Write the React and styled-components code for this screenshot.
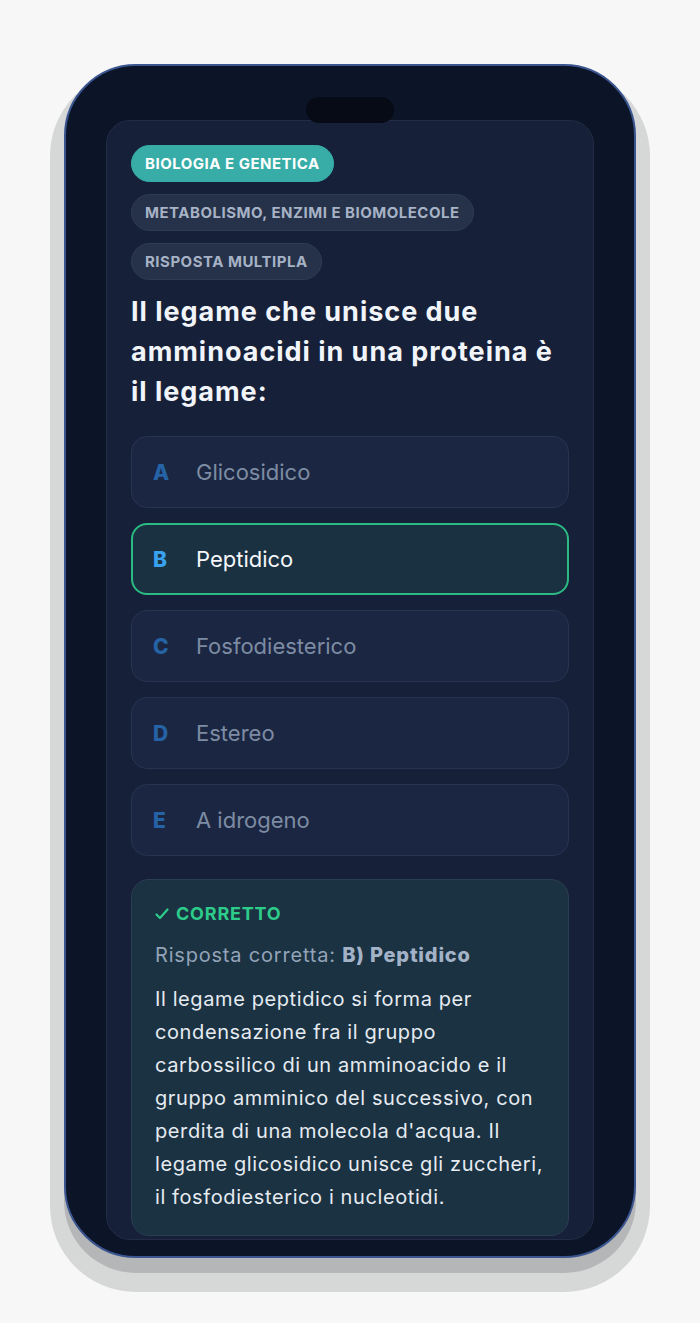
import React from 'react'
import styled, { createGlobalStyle } from 'styled-components'

const GlobalStyle = createGlobalStyle`
  html, body {
    margin: 0;
    padding: 0;
    background: #f7f7f7;
  }
  body {
    font-family: Inter, "Noto Sans", "Liberation Sans", sans-serif;
    -webkit-font-smoothing: antialiased;
  }
`

const options = [
  { key: 'A', text: 'Glicosidico' },
  { key: 'B', text: 'Peptidico', selected: true },
  { key: 'C', text: 'Fosfodiesterico' },
  { key: 'D', text: 'Estereo' },
  { key: 'E', text: 'A idrogeno' },
]

export default function App() {
  return (
    <Page>
      <GlobalStyle />
      <Phone>
        <Notch />
        <Screen>
          <Tags>
            <Tag accent>Biologia e genetica</Tag>
            <Tag>Metabolismo, enzimi e biomolecole</Tag>
            <Tag>Risposta multipla</Tag>
          </Tags>

          <Question>Il legame che unisce due amminoacidi in una proteina è il legame:</Question>

          <Options>
            {options.map((o) => (
              <Option key={o.key} selected={o.selected}>
                <Letter selected={o.selected}>{o.key}</Letter>
                <OptionText selected={o.selected}>{o.text}</OptionText>
              </Option>
            ))}
          </Options>

          <Feedback>
            <Verdict>
              <svg width="14" height="14" viewBox="0 0 14 14" fill="none">
                <polyline points="1.5,7.5 5,11 12.5,2.5" stroke="#2ecc8a" strokeWidth="2.2" strokeLinecap="round" strokeLinejoin="round" />
              </svg>
              CORRETTO
            </Verdict>
            <Answer>
              Risposta corretta: <strong>B) Peptidico</strong>
            </Answer>
            <Explanation>
              Il legame peptidico si forma per condensazione fra il gruppo carbossilico di un amminoacido e il gruppo
              amminico del successivo, con perdita di una molecola d'acqua. Il legame glicosidico unisce gli zuccheri,
              il fosfodiesterico i nucleotidi.
            </Explanation>
          </Feedback>
        </Screen>
      </Phone>
    </Page>
  )
}

const Page = styled.div`
  min-height: 1323px;
  padding-top: 64px;
  box-sizing: border-box;
`

const Phone = styled.div`
  position: relative;
  width: 572px;
  margin: 0 auto;
  box-sizing: border-box;
  padding: 54px 40px 16px;
  background: #0c1427;
  border: 2px solid #3a5590;
  border-radius: 72px;
  box-shadow: 0 15px 0 0 #b5b6b7, 0 20px 0 14px #d6d7d7;
`

const Notch = styled.div`
  position: absolute;
  top: 31px;
  left: 50%;
  transform: translateX(-50%);
  width: 88px;
  height: 26px;
  border-radius: 13px;
  background: #070b16;
  z-index: 2;
`

const Screen = styled.div`
  height: 1120px;
  box-sizing: border-box;
  overflow: hidden;
  padding: 24px;
  background: #172039;
  border: 1px solid #222c46;
  border-radius: 24px;
  display: flex;
  flex-direction: column;
`

const Tags = styled.div`
  display: flex;
  flex-direction: column;
  align-items: flex-start;
  gap: 12px;
`

const Tag = styled.span`
  display: inline-block;
  padding: 8px 13px;
  line-height: 19px;
  font-size: 15px;
  font-weight: 700;
  letter-spacing: 0.5px;
  text-transform: uppercase;
  border-radius: 999px;
  color: ${(p) => (p.accent ? '#ffffff' : '#a6b2c6')};
  background: ${(p) => (p.accent ? '#38ada8' : '#263249')};
  border: 1px solid ${(p) => (p.accent ? '#38ada8' : '#2f3b54')};
`

const Question = styled.h1`
  margin: 12px 0 24px;
  font-size: 27px;
  line-height: 40px;
  font-weight: 700;
  letter-spacing: 0.036em;
  color: #f1f5f9;
`

const Options = styled.div`
  display: flex;
  flex-direction: column;
  gap: 15px;
`

const Option = styled.div`
  display: flex;
  align-items: center;
  height: 72px;
  box-sizing: border-box;
  padding: 0 21px;
  border-radius: 16px;
  background: ${(p) => (p.selected ? '#1a3142' : '#1b2742')};
  border: ${(p) => (p.selected ? '2px solid #2bbb82' : '1px solid #273350')};
  padding-left: ${(p) => (p.selected ? '20px' : '21px')};
`

const Letter = styled.span`
  width: 43px;
  flex-shrink: 0;
  font-size: 21px;
  font-weight: 800;
  color: ${(p) => (p.selected ? '#39a2f0' : '#2563a6')};
`

const OptionText = styled.span`
  font-size: 22px;
  line-height: 30px;
  color: ${(p) => (p.selected ? '#f5f7fa' : '#7d8ca3')};
`

const Feedback = styled.div`
  margin-top: 23px;
  padding: 22px 23px 21px;
  border-radius: 18px;
  background: #1a3242;
  border: 1px solid #2b3d52;
`

const Verdict = styled.div`
  display: flex;
  align-items: center;
  gap: 7px;
  font-size: 18px;
  line-height: 24px;
  font-weight: 700;
  letter-spacing: 0.8px;
  color: #2ecc8a;
`

const Answer = styled.div`
  margin-top: 15px;
  font-size: 20px;
  line-height: 28px;
  letter-spacing: 0.04em;
  color: #94a3b8;

  strong {
    font-weight: 800;
    color: #a4b2c8;
  }
`

const Explanation = styled.p`
  margin: 14px 0 0;
  font-size: 20px;
  line-height: 33px;
  letter-spacing: 0.03em;
  color: #e6ebf1;
`
